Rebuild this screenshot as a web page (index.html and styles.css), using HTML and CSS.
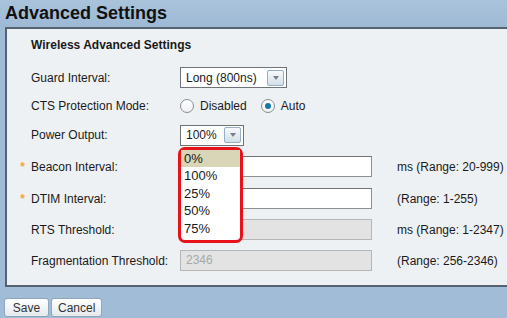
FILE: index.html
```html
<!DOCTYPE html>
<html lang="en">
<head>
    <meta charset="UTF-8">
    <meta name="viewport" content="width=device-width, initial-scale=1.0">
    <title>Advanced Settings</title>
    <link rel="stylesheet" href="styles.css">
</head>
<body>

<h1 class="page-title">Advanced Settings</h1>

<div class="panel">
    <div class="section-title">Wireless Advanced Settings</div>

    <div class="form">
        <!-- Guard Interval -->
        <div class="row row-guard">
            <span class="mark"></span>
            <span class="label">Guard Interval:</span>
            <span class="field">
                <span class="select select-guard">
                    <span class="select-value">Long (800ns)</span>
                    <span class="select-btn"><span class="arrow"></span></span>
                </span>
            </span>
        </div>

        <!-- CTS Protection -->
        <div class="row row-cts">
            <span class="mark"></span>
            <span class="label">CTS Protection Mode:</span>
            <span class="field">
                <span class="radio"></span><span class="radio-text">Disabled</span>
                <span class="radio checked"></span><span class="radio-text">Auto</span>
            </span>
        </div>

        <!-- Power Output + открытый список -->
        <div class="row row-power">
            <span class="mark"></span>
            <span class="label">Power Output:</span>
            <span class="field">
                <span class="select select-power">
                    <span class="select-value">100%</span>
                    <span class="select-btn"><span class="arrow"></span></span>
                    <span class="options">
                        <span class="option active">0%</span>
                        <span class="option">100%</span>
                        <span class="option">25%</span>
                        <span class="option">50%</span>
                        <span class="option">75%</span>
                    </span>
                </span>
            </span>
        </div>

        <div class="row row-beacon">
            <span class="mark">*</span>
            <span class="label">Beacon Interval:</span>
            <span class="field"><span class="input"></span></span>
            <span class="hint">ms (Range: 20-999)</span>
        </div>

        <div class="row">
            <span class="mark">*</span>
            <span class="label">DTIM Interval:</span>
            <span class="field"><span class="input"></span></span>
            <span class="hint">(Range: 1-255)</span>
        </div>

        <div class="row">
            <span class="mark"></span>
            <span class="label">RTS Threshold:</span>
            <span class="field"><span class="input disabled"></span></span>
            <span class="hint">ms (Range: 1-2347)</span>
        </div>

        <div class="row">
            <span class="mark"></span>
            <span class="label">Fragmentation Threshold:</span>
            <span class="field"><span class="input disabled">2346</span></span>
            <span class="hint">(Range: 256-2346)</span>
        </div>
    </div>
</div>

<div class="buttons">
    <button class="btn btn-save">Save</button>
    <button class="btn">Cancel</button>
</div>

</body>
</html>
```

FILE: styles.css
```css
body {
    margin: 0;
    font-family: "Liberation Sans", Arial, sans-serif;
    font-size: 12px;
    color: #1a1a1a;
    background: #a0bcd7;
    overflow: hidden;
}
.page-title {
    margin: 0;
    height: 27px;
    padding: 0 5px;
    font-size: 18px;
    line-height: 26px;
    font-weight: bold;
    color: #111;
    background: linear-gradient(to bottom, #aac3db, #9db9d5);
}
.panel {
    margin-left: 5px;
    border: 2px solid #56636f;
    border-right: none;
    background: #eef1f4;
    padding: 9px 0 9px 0;
}
.section-title {
    padding-left: 24px;
    font-weight: bold;
    line-height: 14px;
    margin-bottom: 11px;
}
.row {
    display: flex;
    align-items: center;
    height: 31px;
}
.row-guard { height: 29px; }
.row-cts { height: 28px; }
.row-power { height: 30px; }
.row-beacon { height: 33px; }
.mark {
    width: 24px;
    flex: none;
    text-align: right;
    padding-right: 6px;
    box-sizing: border-box;
    color: #f3a638;
    font-weight: bold;
    font-size: 12px;
}
.label {
    width: 149px;
    flex: none;
}
.field {
    width: 217px;
    flex: none;
    display: flex;
    align-items: center;
}
.hint {
    color: #1a1a1a;
}
.select {
    position: relative;
    display: flex;
    align-items: center;
    justify-content: space-between;
    height: 21px;
    box-sizing: border-box;
    border: 1px solid #6f7478;
    background: #fff;
    padding: 0 2px 0 5px;
}
.select-guard { width: 107px; }
.select-power { width: 64px; }
.select-btn {
    width: 15px;
    height: 14px;
    border: 1px solid #98aec4;
    border-radius: 2px;
    background: linear-gradient(to bottom, #f6f9fb, #d3dfe9);
    display: flex;
    align-items: center;
    justify-content: center;
}
.arrow {
    width: 0;
    height: 0;
    border-left: 3px solid transparent;
    border-right: 3px solid transparent;
    border-top: 4px solid #7a7f85;
}
.options {
    position: absolute;
    left: -3px;
    top: 21px;
    width: 59px;
    display: flex;
    flex-direction: column;
    padding: 0 0 3px;
    border: 3px solid #e8121a;
    border-radius: 7px;
    background: #fff;
    z-index: 2;
}
.option {
    height: 17.5px;
    line-height: 17.5px;
    padding-left: 3px;
    font-size: 13px;
}
.option.active {
    background: #d8d6b6;
}
.radio {
    width: 12px;
    height: 12px;
    border: 1px solid #8a8e92;
    border-radius: 50%;
    background: linear-gradient(to bottom, #fff, #eef0f2);
    display: inline-flex;
    align-items: center;
    justify-content: center;
}
.radio.checked::after {
    content: "";
    width: 6px;
    height: 6px;
    border-radius: 50%;
    background: #1579a6;
}
.radio-text {
    margin: 0 14px 0 6px;
}
.input {
    width: 192px;
    height: 21px;
    box-sizing: border-box;
    border: 1px solid #8c8f92;
    border-top-color: #6f7376;
    background: #fff;
    padding-left: 5px;
    line-height: 19px;
}
.input.disabled {
    background: #e3e3e3;
    border-color: #b4b6b8;
    color: #a8a8a8;
}
.buttons {
    margin: 11px 0 0 4px;
    display: flex;
    gap: 2px;
}
.btn {
    height: 19px;
    padding: 0 6px;
    font-family: "Liberation Sans", Arial, sans-serif;
    font-size: 12px;
    color: #333;
    border: 1px solid #8ea6bf;
    border-radius: 3px;
    background: linear-gradient(to bottom, #ffffff, #e4e9ee);
}
.btn-save {
    min-width: 45px;
}
```
